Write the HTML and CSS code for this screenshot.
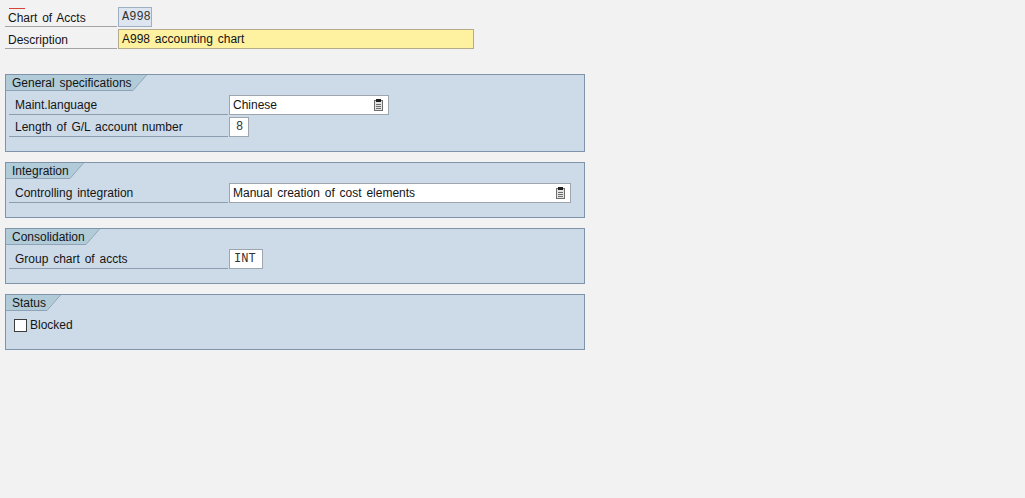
FILE: index.html
```html
<!DOCTYPE html>
<html lang="en">
<head>
	<meta charset="UTF-8">
	<title>Chart of Accounts</title>
	<link rel="stylesheet" href="styles.css">
</head>
<body>
	<div class="screen">
		<div class="topRow first">
			<span class="topLbl req">Chart of Accts</span>
			<span class="fld ro mono wCode">A998</span>
		</div>
		<div class="topRow">
			<span class="topLbl">Description</span>
			<span class="fld hl wDesc">A998 accounting chart</span>
		</div>

		<div class="group">
			<div class="tab"><span class="tabText">General specifications</span><svg class="tabEdge" width="14" height="16" viewBox="0 0 14 16"><polygon points="0,0 13,0 0,15" fill="#b1cbd9"/><line x1="0" y1="15.5" x2="13.5" y2="0" stroke="#8fa3b6" stroke-width="1"/></svg></div>
			<div class="groupBody">
				<div class="row">
					<span class="lbl">Maint.language</span>
					<span class="fld wLang">Chinese<svg class="f4" width="9" height="12" viewBox="0 0 9 12"><rect x="0.5" y="1.5" width="8" height="10" fill="#e4e4e4" stroke="#6d6d6d"/><rect x="2" y="0" width="5" height="3" fill="#1f1f1f"/><line x1="2" y1="5.5" x2="7" y2="5.5" stroke="#6d6d6d"/><line x1="2" y1="7.5" x2="7" y2="7.5" stroke="#6d6d6d"/><line x1="2" y1="9.5" x2="7" y2="9.5" stroke="#6d6d6d"/></svg></span>
				</div>
				<div class="row">
					<span class="lbl">Length of G/L account number</span>
					<span class="fld mono wOne">8</span>
				</div>
			</div>
		</div>

		<div class="group">
			<div class="tab"><span class="tabText">Integration</span><svg class="tabEdge" width="14" height="16" viewBox="0 0 14 16"><polygon points="0,0 13,0 0,15" fill="#b1cbd9"/><line x1="0" y1="15.5" x2="13.5" y2="0" stroke="#8fa3b6" stroke-width="1"/></svg></div>
			<div class="groupBody">
				<div class="row">
					<span class="lbl">Controlling integration</span>
					<span class="fld wCtrl">Manual creation of cost elements<svg class="f4" width="9" height="12" viewBox="0 0 9 12"><rect x="0.5" y="1.5" width="8" height="10" fill="#e4e4e4" stroke="#6d6d6d"/><rect x="2" y="0" width="5" height="3" fill="#1f1f1f"/><line x1="2" y1="5.5" x2="7" y2="5.5" stroke="#6d6d6d"/><line x1="2" y1="7.5" x2="7" y2="7.5" stroke="#6d6d6d"/><line x1="2" y1="9.5" x2="7" y2="9.5" stroke="#6d6d6d"/></svg></span>
				</div>
			</div>
		</div>

		<div class="group">
			<div class="tab"><span class="tabText">Consolidation</span><svg class="tabEdge" width="14" height="16" viewBox="0 0 14 16"><polygon points="0,0 13,0 0,15" fill="#b1cbd9"/><line x1="0" y1="15.5" x2="13.5" y2="0" stroke="#8fa3b6" stroke-width="1"/></svg></div>
			<div class="groupBody">
				<div class="row">
					<span class="lbl">Group chart of accts</span>
					<span class="fld mono wInt">INT</span>
				</div>
			</div>
		</div>

		<div class="group">
			<div class="tab"><span class="tabText">Status</span><svg class="tabEdge" width="14" height="16" viewBox="0 0 14 16"><polygon points="0,0 13,0 0,15" fill="#b1cbd9"/><line x1="0" y1="15.5" x2="13.5" y2="0" stroke="#8fa3b6" stroke-width="1"/></svg></div>
			<div class="groupBody">
				<label class="check"><span class="box"></span>Blocked</label>
			</div>
		</div>
	</div>
</body>
</html>
```

FILE: styles.css
```css
html,body{margin:0px;padding:0px;}
body{
	background-color: #f2f2f2;
	font-family: "Liberation Sans", Arial, sans-serif;
	font-size: 12px;
	word-spacing: 1.5px;
	color: #141414;
}
.screen{
	padding: 7px 0 0 5px;
	width: 580px;
}
.mono{
	font-family: "Liberation Mono", "Courier New", monospace;
	font-size: 12px;
	word-spacing: 0;
	color: #333;
}
.topRow{
	display: flex;
	height: 20px;
	margin-top: 2px;
}
.topRow.first{
	margin-top: 0;
}
.topLbl{
	position: relative;
	width: 109px;
	height: 19px;
	padding-left: 3px;
	line-height: 22px;
	border-bottom: 1px solid #a3a3a3;
}
.req::before{
	content: "";
	position: absolute;
	left: 4px;
	top: 1px;
	width: 16px;
	height: 1px;
	background-color: #d8403a;
}
.fld{
	box-sizing: border-box;
	display: flex;
	align-items: center;
	height: 20px;
	padding-left: 3px;
	background-color: #fff;
	border: 1px solid #9da5ae;
	margin-left: 1px;
	white-space: nowrap;
}
.fld .f4{
	margin-left: auto;
	margin-right: 5px;
}
.ro{
	background-color: #dde6f0;
	border-color: #9fb0c2;
}
.hl{
	background-color: #fef1a0;
	border-color: #b3ab8a;
}
.wCode{width: 34px;}
.wDesc{width: 356px;}
.wLang{width: 160px;}
.wOne{width: 20px; padding-left: 6px;}
.wCtrl{width: 342px;}
.wInt{width: 34px; padding-left: 4px;}

.group{
	margin-top: 10px;
	border: 1px solid #7f93aa;
	background-color: #cddbe9;
}
.topRow + .group{
	margin-top: 25px;
}
.tab{
	display: flex;
	height: 16px;
}
.tabText{
	height: 15px;
	line-height: 16px;
	padding: 0 1px 0 6px;
	background-color: #b1cbd9;
	border-bottom: 1px solid #8fa3b6;
}
.groupBody{
	padding: 4px 0 14px 3px;
}
.row{
	display: flex;
	height: 20px;
	margin-bottom: 2px;
}
.row:last-child{
	margin-bottom: 0;
}
.lbl{
	width: 213px;
	height: 19px;
	padding-left: 6px;
	line-height: 21px;
	border-bottom: 1px solid #8d9db0;
}
.check{
	display: flex;
	align-items: center;
	height: 20px;
	margin-left: 5px;
}
.box{
	box-sizing: border-box;
	width: 13px;
	height: 13px;
	margin-right: 3px;
	background-color: #fff;
	border: 1px solid #3c3c3c;
}
```
